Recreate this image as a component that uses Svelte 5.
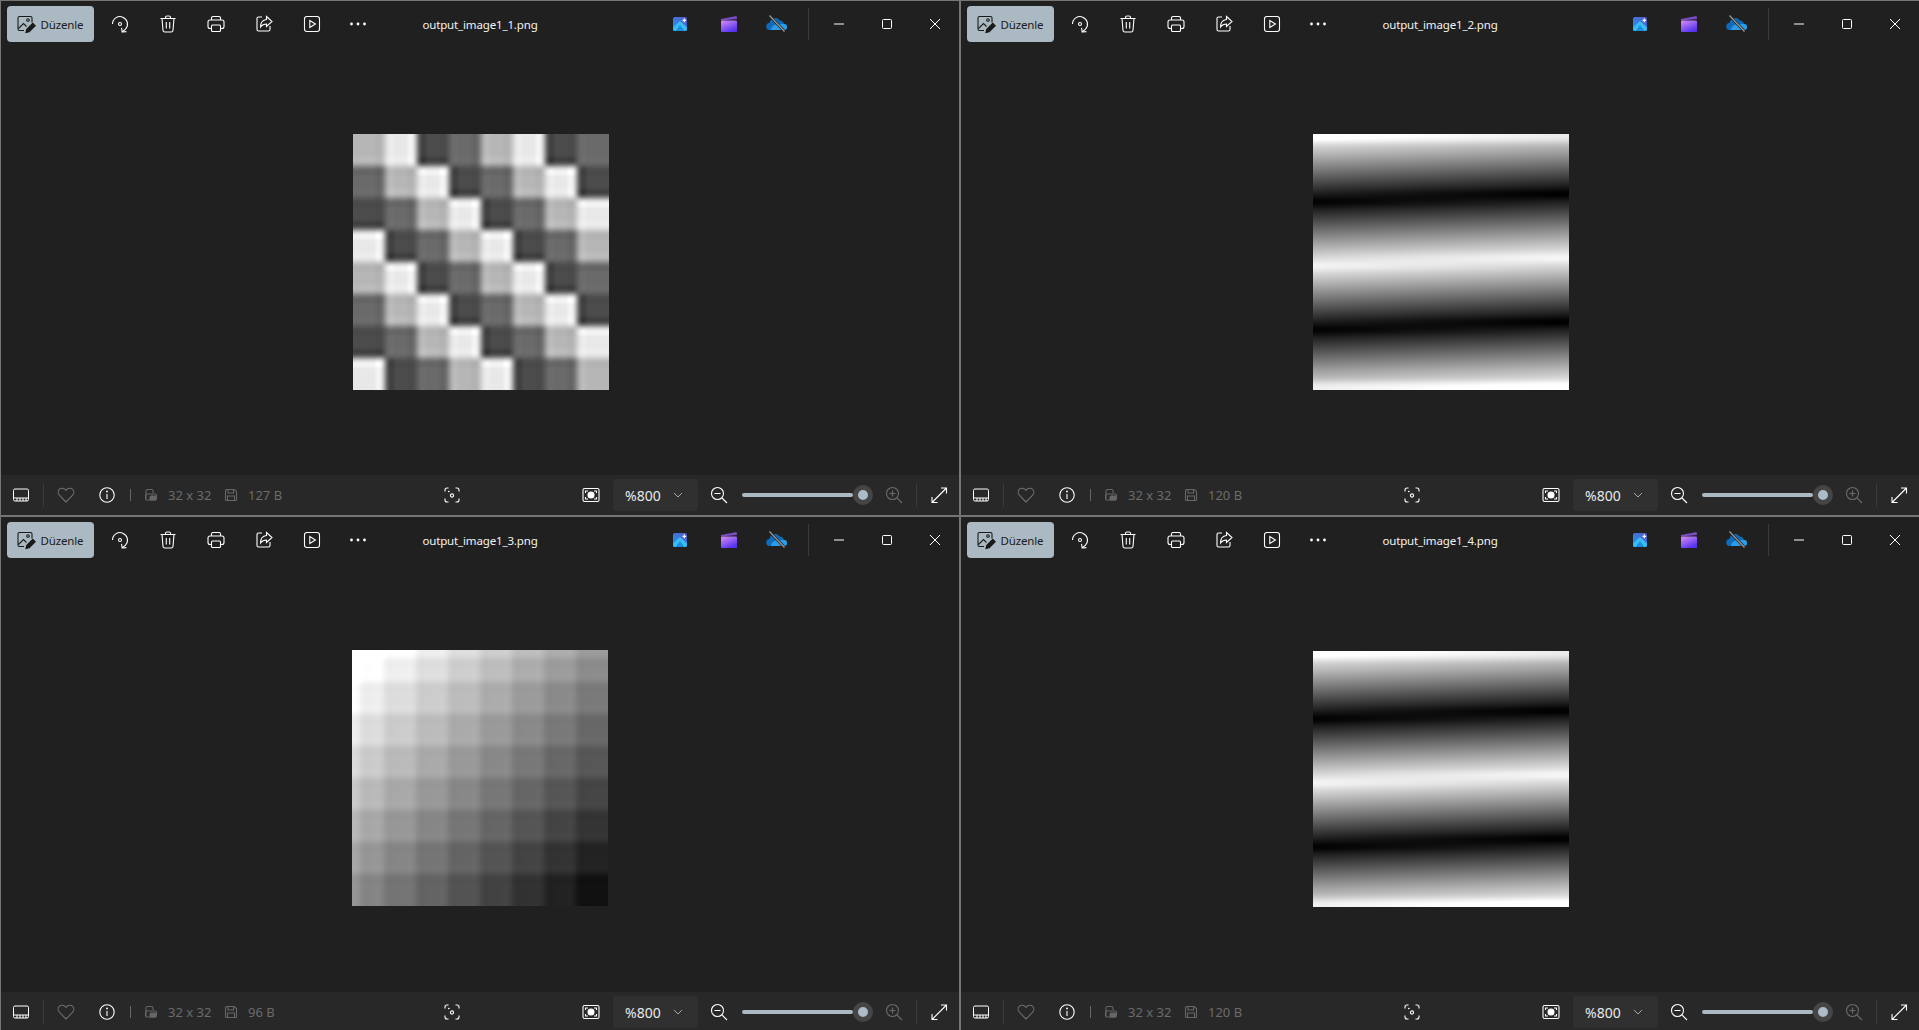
<script>
	const L = 32, S = 8;

	// the four pictures as 32x32 grey maps, same idea as the source pngs
	function checker(x, y) {
		const lv = [182, 232, 76, 106];
		const c = x >> 2, r = y >> 2;
		return lv[(c - r + 16) % 4];
	}
	function ramp(x, y) {
		const c = x >> 2, r = y >> 2;
		let v = 255 - 16.5 * c - 17.5 * r;
		if (x === 0 || y === 0) v += 16;
		return v;
	}
	function bands(x, y) {
		const px = x * S + 4, py = y * S + 4;
		const d = py + px / 32 - 3.5;
		const m = ((d % 128) + 128) % 128;
		const t = Math.abs(m - 64) / 64;
		let v = t * 246;
		if (y === 0 || y === L - 1) v += 18;
		return v;
	}

	const windows = [
		{ name: 'output_image1_1.png', size: '127 B', map: checker },
		{ name: 'output_image1_2.png', size: '120 B', map: bands },
		{ name: 'output_image1_3.png', size: '96 B', map: ramp },
		{ name: 'output_image1_4.png', size: '120 B', map: bands }
	];

	function cubic(a, b, c, d, t) {
		return b + 0.5 * t * (c - a + t * (2 * a - 5 * b + 4 * c - d + t * (3 * (b - c) + d - a)));
	}

	function paint(canvas, map) {
		const ctx = canvas.getContext('2d');
		const size = L * S;
		const img = ctx.createImageData(size, size);
		const at = (x, y) => map(Math.min(L - 1, Math.max(0, x)), Math.min(L - 1, Math.max(0, y)));
		for (let py = 0; py < size; py++) {
			const fy = (py + 0.5) / S - 0.5, y0 = Math.floor(fy), ty = fy - y0;
			for (let px = 0; px < size; px++) {
				const fx = (px + 0.5) / S - 0.5, x0 = Math.floor(fx), tx = fx - x0;
				const col = [];
				for (let j = -1; j < 3; j++) {
					col.push(cubic(at(x0 - 1, y0 + j), at(x0, y0 + j), at(x0 + 1, y0 + j), at(x0 + 2, y0 + j), tx));
				}
				const v = cubic(col[0], col[1], col[2], col[3], ty);
				const i = (py * size + px) * 4;
				img.data[i] = img.data[i + 1] = img.data[i + 2] = v;
				img.data[i + 3] = 255;
			}
		}
		ctx.putImageData(img, 0, 0);
	}
</script>

<div class="desk">
	{#each windows as w, i}
		<section class="win w{i}">
			<header class="top">
				<div class="left">
					<button class="edit">
						<svg width="20" height="20" viewBox="0 0 20 20" fill="none" stroke="#1a1a1a" stroke-width="1.1">
							<path d="M8 16.500H3.500a1.500 1.500 0 0 1-1.500-1.500V4a1.500 1.500 0 0 1 1.500-1.500h11A1.500 1.500 0 0 1 16 4v4.500"/>
							<path d="M2.500 14.500 7.500 9.500 10.500 12.500"/>
							<circle cx="12" cy="6" r="1.300"/>
							<path d="M10 18.500l.8-3.200 6-6 2.400 2.400-6 6z" fill="#1a1a1a"/>
						</svg>
						<span>Düzenle</span>
					</button>
					<button class="ic">
						<svg width="20" height="20" viewBox="0 0 20 20" fill="none" stroke="#fff" stroke-width="1.1">
							<path d="M2.500 10A7.500 7.500 0 1 1 15.500 15.200L12 18"/>
							<path d="M11.500 13.800 12.200 18l4.200-.4"/>
							<circle cx="10" cy="10" r="1.500"/>
						</svg>
					</button>
					<button class="ic">
						<svg width="20" height="20" viewBox="0 0 20 20" fill="none" stroke="#fff" stroke-width="1.1">
							<path d="M2.500 4.500h15M7.500 4.500V3.500a1.500 1.500 0 0 1 1.500-1.500h2a1.500 1.500 0 0 1 1.500 1.500v1"/>
							<path d="M4 4.500 5 16.500a1.800 1.800 0 0 0 1.800 1.500h6.400a1.800 1.800 0 0 0 1.800-1.500L16 4.500"/>
							<path d="M8.300 8v6.500M11.700 8v6.500"/>
						</svg>
					</button>
					<button class="ic">
						<svg width="20" height="20" viewBox="0 0 20 20" fill="none" stroke="#fff" stroke-width="1.1">
							<path d="M5.500 6V4a1.500 1.500 0 0 1 1.500-1.500h6A1.500 1.500 0 0 1 14.500 4v2"/>
							<path d="M5.500 14.500H4A2 2 0 0 1 2 12.500V8a2 2 0 0 1 2-2h12a2 2 0 0 1 2 2v4.500a2 2 0 0 1-2 2h-1.500"/>
							<rect x="5.500" y="11" width="9" height="6.500" rx="1"/>
						</svg>
					</button>
					<button class="ic">
						<svg width="20" height="20" viewBox="0 0 20 20" fill="none" stroke="#fff" stroke-width="1.1">
							<path d="M8 3H4.500A1.500 1.500 0 0 0 3 4.500v11A1.500 1.500 0 0 0 4.500 17h10a1.500 1.500 0 0 0 1.500-1.500V12"/>
							<path d="M12.500 2.500 18 7.500l-5.500 5V10C9.500 10 8 11 6.500 13c0-4 2-7 6-7.500z"/>
						</svg>
					</button>
					<button class="ic">
						<svg width="20" height="20" viewBox="0 0 20 20" fill="none" stroke="#fff" stroke-width="1.1">
							<rect x="2.500" y="2.500" width="15" height="15" rx="2.500"/>
							<path d="M7.800 6.500v7l5.600-3.500z"/>
						</svg>
					</button>
					<button class="ic more">
						<svg width="20" height="20" viewBox="0 0 20 20" fill="#fff">
							<circle cx="3.500" cy="10" r="1.400"/><circle cx="10" cy="10" r="1.400"/><circle cx="16.500" cy="10" r="1.400"/>
						</svg>
					</button>
				</div>
				<div class="title">{w.name}</div>
				<div class="right">
					<button class="ic pic">
						<svg width="14" height="14" viewBox="0 0 14 14">
							<defs>
								<linearGradient id="ph{i}" x1="0" y1="1" x2="1" y2="0">
									<stop offset="0" stop-color="#1a9bf0"/>
									<stop offset="1" stop-color="#5a56c6"/>
								</linearGradient>
							</defs>
							<rect width="14" height="14" rx="2" fill="url(#ph{i})"/>
							<path d="M0 10.500 7 4l7 6.500V12a2 2 0 0 1-2 2H2a2 2 0 0 1-2-2z" fill="#38bdf4"/>
							<path d="M2.500 14 7 8l4.500 6z" fill="#1a8fe0"/>
							<path d="M9.500 2.800h1.200V1.500h1.200v1.300h1.200V4h-1.200v1.300h-1.200V4H9.500z" fill="#fff"/>
						</svg>
					</button>
					<button class="ic">
						<svg width="16" height="16" viewBox="0 0 16 16">
							<defs>
								<linearGradient id="cl{i}" x1="0" y1="0" x2=".6" y2="1">
									<stop offset="0" stop-color="#d88ff6"/>
									<stop offset="1" stop-color="#5532ee"/>
								</linearGradient>
							</defs>
							<path d="M0 3 15.500 0l.5 3-16 1.500z" fill="#7b4cc7"/>
							<rect y="4.500" width="16" height="11.500" rx="1" fill="url(#cl{i})"/>
						</svg>
					</button>
					<button class="ic">
						<svg width="22" height="18" viewBox="0 0 22 18">
							<path d="M4 15a3.500 3.500 0 0 1-.5-7 5.500 5.500 0 0 1 10-2.500A4.500 4.500 0 0 1 18 9a3 3 0 0 1 0 6z" fill="#0f6cbd"/>
							<path d="M5 15c0-3 3-6 8-6 3 0 4 0 5 0a3 3 0 0 1 0 6z" fill="#2a9de6"/>
							<path d="M3.500 .5 18.500 16.500" stroke="#202020" stroke-width="2.600"/>
							<path d="M3.500 .5 18.500 16.500" stroke="#9a9a9a" stroke-width="1.200"/>
						</svg>
					</button>
					<i class="bar"></i>
					<button class="ic">
						<svg width="12" height="12" viewBox="0 0 12 12" stroke="#fff" stroke-width="1"><path d="M1 6h10"/></svg>
					</button>
					<button class="ic">
						<svg width="12" height="12" viewBox="0 0 12 12" fill="none" stroke="#fff" stroke-width="1"><rect x="1.500" y="1.500" width="9" height="9" rx="1"/></svg>
					</button>
					<button class="ic">
						<svg width="12" height="12" viewBox="0 0 12 12" stroke="#fff" stroke-width="1"><path d="M1 1l10 10M11 1 1 11"/></svg>
					</button>
				</div>
			</header>

			<main class="view">
				<canvas width="256" height="256" use:paint={w.map}></canvas>
			</main>

			<footer class="bot">
				<button class="fb">
					<svg width="18" height="18" viewBox="0 0 18 18" fill="none" stroke="#fff" stroke-width="1">
						<path d="M1.500 12V4.500A1.500 1.500 0 0 1 3 3h12a1.500 1.500 0 0 1 1.500 1.500V12z"/>
						<path d="M1.500 12v1.500A1.500 1.500 0 0 0 3 15h12a1.500 1.500 0 0 0 1.500-1.500V12M5 12v3M8 12v3M11 12v3M14 12v3"/>
					</svg>
				</button>
				<i class="bar tall"></i>
				<button class="fb">
					<svg width="18" height="18" viewBox="0 0 18 18" fill="none" stroke="#6e6e6e" stroke-width="1.100">
						<path d="M9 16 2.300 9.200a4.200 4.200 0 0 1 0-5.800 4 4 0 0 1 5.700 0L9 4.400l1-1a4 4 0 0 1 5.700 0 4.200 4.200 0 0 1 0 5.800z"/>
					</svg>
				</button>
				<button class="fb info">
					<svg width="18" height="18" viewBox="0 0 18 18" fill="none" stroke="#fff" stroke-width="1.100">
						<circle cx="9" cy="9" r="7.200"/><path d="M9 8v5"/><circle cx="9" cy="5.500" r=".4"/>
					</svg>
				</button>
				<i class="bar short"></i>
				<svg class="dim-ic" width="14" height="14" viewBox="0 0 14 14" fill="none" stroke="#666" stroke-width="1.100">
					<path d="M2 11V3a1.500 1.500 0 0 1 1.500-1.500h4A1.500 1.500 0 0 1 9 3v2"/><rect x="1.500" y="6" width="11" height="6" rx="1.500"/><rect x="6" y="8" width="6" height="4" rx="1" fill="#666"/>
				</svg>
				<span class="dim">32 x 32</span>
				<svg class="dim-ic save" width="14" height="14" viewBox="0 0 14 14" fill="none" stroke="#666" stroke-width="1.100">
					<path d="M1.500 2.500a1 1 0 0 1 1-1h8l2 2v8a1 1 0 0 1-1 1h-9a1 1 0 0 1-1-1z"/><path d="M4 1.500v3.500h5.500v-3.500M3.500 12.500v-4.500h7v4.500"/>
				</svg>
				<span class="dim size">{w.size}</span>
				<button class="fb focus">
					<svg width="18" height="18" viewBox="0 0 18 18" fill="none" stroke="#fff" stroke-width="1.100">
						<path d="M2 5.500V4a2 2 0 0 1 2-2h1.500M12.500 2H14a2 2 0 0 1 2 2v1.500M16 12.500V14a2 2 0 0 1-2 2h-1.500M5.500 16H4a2 2 0 0 1-2-2v-1.500"/>
						<circle cx="9" cy="9.500" r="1.600"/><path d="M5 5.500h1.500M5.750 4.750v1.500" stroke-width=".9"/>
					</svg>
				</button>
				<button class="fb snap">
					<svg width="18" height="18" viewBox="0 0 18 18" fill="none" stroke="#fff" stroke-width="1.100">
						<rect x="1" y="2.500" width="16" height="13" rx="1.500"/>
						<path d="M3.500 7V5h2.500M14.500 7V5H12M3.500 11v2h2.500M14.500 11v2H12"/>
						<circle cx="9" cy="9" r="3" fill="#fff"/>
					</svg>
				</button>
				<button class="zoom">
					<span>%800</span>
					<svg width="12" height="12" viewBox="0 0 12 12" fill="none" stroke="#a8a8a8" stroke-width="1"><path d="M2 4l4 4 4-4"/></svg>
				</button>
				<button class="fb out">
					<svg width="18" height="18" viewBox="0 0 18 18" fill="none" stroke="#fff" stroke-width="1.100">
						<circle cx="7.500" cy="7.500" r="6"/><path d="M4.500 7.500h6M12 12l5 5"/>
					</svg>
				</button>
				<div class="slider">
					<div class="track"></div>
					<div class="thumb"></div>
				</div>
				<button class="fb out">
					<svg width="18" height="18" viewBox="0 0 18 18" fill="none" stroke="#6a6a6a" stroke-width="1.100">
						<circle cx="7.500" cy="7.500" r="6"/><path d="M4.500 7.500h6M7.500 4.500v6M12 12l5 5"/>
					</svg>
				</button>
				<i class="bar tall"></i>
				<button class="fb">
					<svg width="18" height="18" viewBox="0 0 18 18" fill="none" stroke="#fff" stroke-width="1.100">
						<path d="M11 2h5.500v5.500M16.500 2 2 16.500M2 11v5.500h5.500"/>
					</svg>
				</button>
			</footer>
		</section>
	{/each}
</div>

<style>
	:global(body) { background: #202020; overflow: hidden; }
	.desk { display: grid; grid-template-columns: 960px 959px; grid-template-rows: 516px 516px; width: 1919px; height: 1030px; overflow: hidden; font-family: "Noto Sans", "Open Sans", sans-serif; }
	.win { display: flex; flex-direction: column; min-height: 0; min-width: 0; background: #202020; border-top: 1px solid #767676; border-left: 1px solid #767676; }
	.w0, .w1 { border-bottom: 1px solid #767676; }
	.w0, .w2 { border-right: 1px solid #767676; }
	button { display: flex; align-items: center; justify-content: center; background: none; border: 0; padding: 0; color: inherit; font: inherit; }

	.top { display: grid; grid-template-columns: 1fr auto 1fr; align-items: center; height: 46px; flex: none; }
	.left, .right { display: flex; align-items: center; }
	.left { padding-left: 6px; }
	.right { justify-content: flex-end; }
	.edit { width: 87px; height: 36px; gap: 5px; padding-right: 2px; border-radius: 4px; background: #abb9c3; color: #1b1b1b; font-size: 11.5px; letter-spacing: -0.15px; margin-right: 2px; }
	.ic { width: 48px; height: 36px; }
	.more { margin-left: -2px; }
	.pic { margin-right: 1px; }
	.title { color: #f2f2f2; font-size: 11.5px; letter-spacing: -0.15px; }
	.bar { display: block; width: 1px; height: 32px; background: #3a3a3a; margin: 0 6px 0 7px; }

	.view { flex: 1; display: flex; align-items: center; justify-content: center; min-height: 0; }
	.w0 .view, .w1 .view { padding: 2px 0 0 2px; }
	.w2 .view { padding-top: 1px; }
	.w3 .view { padding: 3px 0 0 2px; }
	canvas { display: block; }

	.bot { display: flex; align-items: center; height: 40px; flex: none; background: #282828; color: #e8e8e8; }
	.fb { width: 40px; height: 32px; flex: none; }
	.bot .bar { margin: 0 2px; flex: none; }
	.bot .bar.tall { height: 24px; }
	.info { margin-left: 1px; }
	.bot .bar.short { height: 12px; background: #666; margin-left: 3px; }
	.dim-ic { flex: none; margin-left: 11px; }
	.dim-ic.save { margin-left: 12px; }
	.dim { color: #6b6b6b; font-size: 13px; margin-left: 10px; width: 44px; flex: none; white-space: nowrap; }
	.dim.size { width: 36px; }
	.focus { margin-left: 148px; }
	.snap { margin-left: 99px; }
	.zoom { width: 85px; height: 32px; flex: none; justify-content: flex-start; padding-left: 12px; gap: 11px; border-radius: 4px; background: #303030; font-size: 14px; margin-left: 2px; }
	.out { margin-left: 1px; }
	.slider { display: flex; align-items: center; width: 131px; margin-left: 3px; flex: none; }
	.track { flex: 1; height: 4px; border-radius: 2px; background: #abb9c3; }
	.thumb { flex: none; width: 10px; height: 10px; border-radius: 50%; background: #abbcc8; border: 5px solid #454545; }
</style>
